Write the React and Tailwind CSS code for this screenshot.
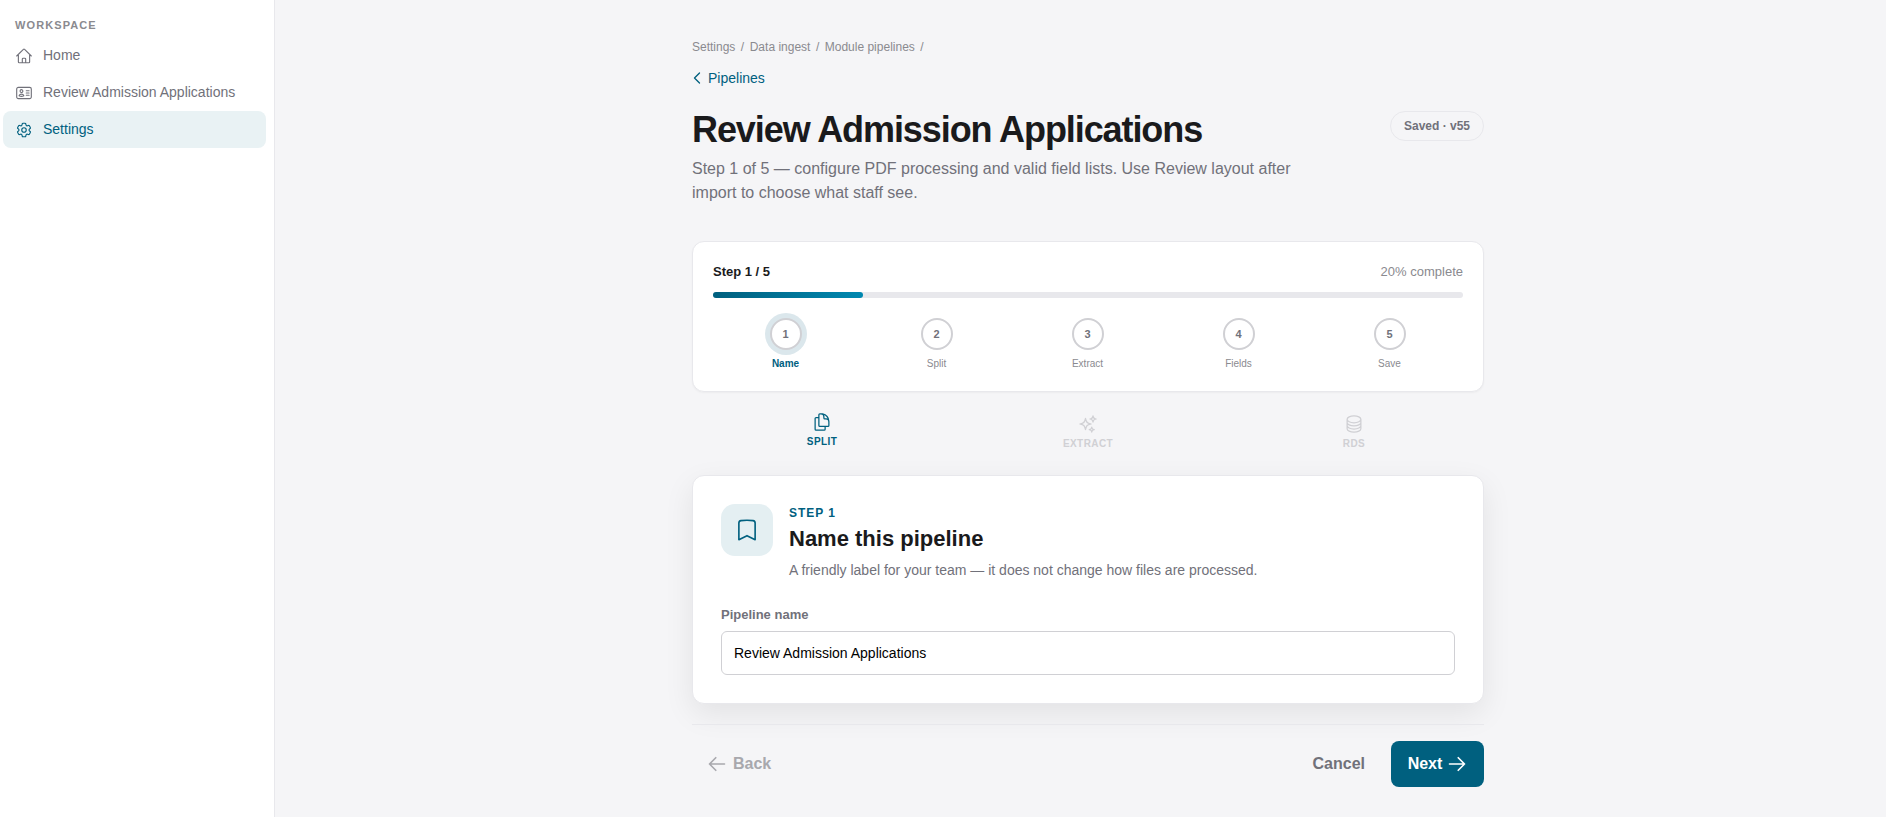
import React from "react";
import {
  HiOutlineHome, HiOutlineIdentification, HiOutlineCog6Tooth, HiOutlineDocumentDuplicate,
  HiOutlineSparkles, HiOutlineCircleStack, HiOutlineBookmark, HiOutlineChevronLeft,
  HiOutlineArrowLeft, HiOutlineArrowRight,
} from "react-icons/hi2";

function NavItem({ icon: Icon, label, active }) {
  return (
    <div className={`flex h-[37px] items-center gap-[10px] rounded-lg pl-3 text-sm ${active ? "bg-[#e9f2f4] text-[#00607f]" : "text-[#71717a]"}`}>
      <Icon className="size-[18px] shrink-0" />
      <span className="pb-[2px]">{label}</span>
    </div>
  );
}

function Step({ n, label, active }) {
  return (
    <div className="flex flex-col items-center">
      <div className={`flex size-8 items-center justify-center rounded-full border-2 border-[#d0d0d4] bg-white text-[11px] font-bold text-[#71717a] ${active ? "ring-[5px] ring-[#dbe7ec]" : ""}`}>
        {n}
      </div>
      <div className={`mt-[8px] text-[10px] leading-[12px] ${active ? "font-bold text-[#00607f]" : "text-[#8a8a8f]"}`}>{label}</div>
    </div>
  );
}

function Tab({ icon: Icon, label, active }) {
  return (
    <div className={`flex flex-col items-center ${active ? "-translate-y-0.5 text-[#00607f]" : "text-[#d0d0d4]"}`}>
      <Icon className="size-5" />
      <div className="mt-[3px] text-[10px] leading-[14px] font-bold tracking-[0.04em]">{label}</div>
    </div>
  );
}

export default function App() {
  return (
    <div className="flex h-screen w-full overflow-hidden bg-[#f5f5f7] font-['Liberation_Sans',Arial,sans-serif]">
      <aside className="w-[275px] shrink-0 border-r border-[#e8e8ec] bg-white pt-[19px] pr-2 pl-[3px]">
        <div className="pl-3 text-[11px] leading-[13px] font-bold tracking-[0.1em] text-[#8a8a8f]">WORKSPACE</div>
        <nav className="mt-[5px] flex flex-col">
          <NavItem icon={HiOutlineHome} label="Home" />
          <NavItem icon={HiOutlineIdentification} label="Review Admission Applications" />
          <NavItem icon={HiOutlineCog6Tooth} label="Settings" active />
        </nav>
      </aside>
      <main className="flex flex-1 justify-center pl-[15px]">
        <div className="w-[792px] pt-[38px]">
          <div className="flex items-center gap-[5.5px] text-xs leading-[18px] text-[#8a8a8f]">
            <span>Settings</span><span>/</span><span>Data ingest</span><span>/</span><span>Module pipelines</span><span>/</span>
          </div>
          <div className="mt-[12px] flex h-5 items-center gap-[3px] text-sm text-[#00607f]">
            <HiOutlineChevronLeft className="-ml-[3px] size-[16px]" strokeWidth={2} />
            <span>Pipelines</span>
          </div>
          <div className="mt-[20px] flex items-start justify-between">
            <div>
              <h1 className="text-4xl leading-[44px] font-bold tracking-[-0.03em] text-[#1a1a1c]">Review Admission Applications</h1>
              <p className="mt-[5px] max-w-[600px] text-base leading-6 text-[#71717a]">
                Step 1 of 5 — configure PDF processing and valid field lists. Use Review layout after import to choose what staff see.
              </p>
            </div>
            <div className="mt-[3px] flex h-[30px] items-center rounded-full border border-[#e8e8ec] px-[13px] text-xs font-bold text-[#71717a]">Saved · v55</div>
          </div>

          <section className="mt-[36px] h-[151px] rounded-xl border border-[#e8e8ec] bg-white px-5 pt-[20px] shadow-[0_1px_2px_rgba(0,0,0,0.04)]">
            <div className="flex items-center justify-between text-[13px] leading-5">
              <span className="font-bold text-[#1a1a1c]">Step 1 / 5</span>
              <span className="text-[#8a8a8f]">20% complete</span>
            </div>
            <div className="mt-[10px] h-1.5 rounded-full bg-[#e8e8ec]">
              <div className="h-full w-[20%] rounded-full bg-gradient-to-r from-[#00607f] to-[#0088b0]" />
            </div>
            <div className="mt-[20px] -mr-[2px] -ml-[3px] grid grid-cols-5">
              <Step n={1} label="Name" active />
              <Step n={2} label="Split" />
              <Step n={3} label="Extract" />
              <Step n={4} label="Fields" />
              <Step n={5} label="Save" />
            </div>
          </section>

          <div className="mt-[22px] -mx-[3px] grid grid-cols-3">
            <Tab icon={HiOutlineDocumentDuplicate} label="SPLIT" active />
            <Tab icon={HiOutlineSparkles} label="EXTRACT" />
            <Tab icon={HiOutlineCircleStack} label="RDS" />
          </div>

          <section className="mt-[24px] h-[229px] rounded-xl border border-[#e8e8ec] bg-white px-[28px] pt-[28px] shadow-[0_10px_30px_rgba(0,0,0,0.08)]">
            <div className="flex gap-4">
              <div className="flex size-[52px] shrink-0 items-center justify-center rounded-[14px] bg-[#e4eff2] text-[#00607f]">
                <HiOutlineBookmark className="size-[26px]" />
              </div>
              <div>
                <div className="text-xs leading-[18px] font-bold tracking-[0.08em] text-[#00607f]">STEP 1</div>
                <h2 className="mt-[3px] text-[22px] leading-7 font-bold text-[#1a1a1c]">Name this pipeline</h2>
                <p className="mt-[7px] text-sm leading-5 text-[#71717a]">A friendly label for your team — it does not change how files are processed.</p>
              </div>
            </div>
            <label className="mt-[26px] block text-[13px] leading-[18px] font-bold text-[#71717a]">Pipeline name</label>
            <input readOnly value="Review Admission Applications" className="mt-[7px] h-[44px] w-full rounded-md border border-[#d0d0d4] bg-white px-3 text-sm text-black outline-none" />
          </section>

          <div className="mt-[20px] flex items-center justify-between border-t border-[#e8e8ec] pt-4">
            <div className="flex items-center gap-[6px] pl-[15px] text-base font-bold text-[#a8a8ad]">
              <HiOutlineArrowLeft className="size-5" strokeWidth={2} />
              <span>Back</span>
            </div>
            <div className="flex items-center gap-[26px]">
              <span className="text-base font-bold text-[#71717a]">Cancel</span>
              <button className="flex h-[46px] w-[93px] items-center justify-center gap-[5px] rounded-lg bg-[#00607f] text-base font-bold text-white">
                <span>Next</span>
                <HiOutlineArrowRight className="size-5" strokeWidth={2} />
              </button>
            </div>
          </div>
        </div>
      </main>
    </div>
  );
}
